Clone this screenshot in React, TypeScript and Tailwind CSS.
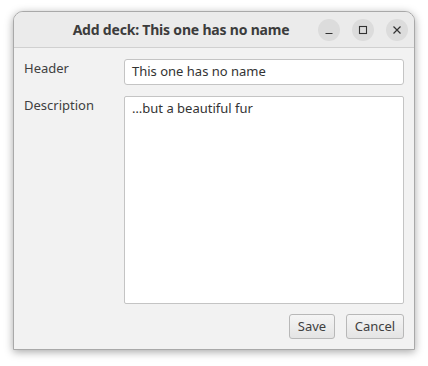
import React from "react";

export default function App() {
  const font = { fontFamily: '"Noto Sans", "Open Sans", sans-serif' };
  return (
    <div className="w-[428px] h-[366px] bg-white pl-[13px] pt-[11px]" style={font}>
      <div className="w-[402px] h-[339px] flex flex-col bg-[#f2f2f2] border border-[#a9a9a9] rounded-t-[10px] shadow-[0_2px_8px_rgba(0,0,0,0.35)] overflow-hidden">
        <div className="h-[36px] shrink-0 bg-[#ebebeb] border-b border-[#d0d0d0] flex items-center relative">
          <div className="absolute left-0 right-[100px] top-0 bottom-0 flex items-center justify-center pl-[34px]">
            <span className="text-[14px] font-bold text-[#3c3c3c] tracking-[-0.2px]">Add deck: This one has no name</span>
          </div>
          <div className="ml-auto flex items-center gap-[12px] pr-[6px]">
            <div className="w-[22px] h-[22px] rounded-full bg-[#dcdcdc] flex items-center justify-center">
              <svg width="10" height="10" viewBox="0 0 10 10"><path d="M1.5 8.5h7" stroke="#333" strokeWidth="1.2" /></svg>
            </div>
            <div className="w-[22px] h-[22px] rounded-full bg-[#dcdcdc] flex items-center justify-center">
              <svg width="10" height="10" viewBox="0 0 10 10"><rect x="1.5" y="1.5" width="7" height="7" fill="none" stroke="#333" strokeWidth="1.1" /></svg>
            </div>
            <div className="w-[22px] h-[22px] rounded-full bg-[#dcdcdc] flex items-center justify-center">
              <svg width="10" height="10" viewBox="0 0 10 10"><path d="M1.5 1.5l7 7M8.5 1.5l-7 7" stroke="#333" strokeWidth="1.2" /></svg>
            </div>
          </div>
        </div>
        <div className="flex-1 flex flex-col pl-[10px] pr-[10px] pt-[11px] pb-[10px] gap-[11px] text-[13px] text-[#404040]">
          <div className="flex">
            <div className="w-[100px] shrink-0 leading-[18px]">Header</div>
            <div className="flex-1 h-[26px] bg-white border border-[#c4c4c4] rounded-[3px] flex items-center px-[7px] text-[#333]">This one has no name</div>
          </div>
          <div className="flex flex-1">
            <div className="w-[100px] shrink-0 leading-[18px]">Description</div>
            <div className="flex-1 bg-white border border-[#c4c4c4] rounded-[2px] px-[7px] pt-[2px] leading-[18px] text-[#333]">…but a beautiful fur</div>
          </div>
          <div className="flex justify-end gap-[11px] -mt-[1px]">
            <div className="h-[25px] w-[46px] flex items-center justify-center rounded-[3px] border border-[#b8b8b8] bg-gradient-to-b from-[#f5f5f5] to-[#e4e4e4] text-[#404040]">Save</div>
            <div className="h-[25px] w-[58px] flex items-center justify-center rounded-[3px] border border-[#b8b8b8] bg-gradient-to-b from-[#f5f5f5] to-[#e4e4e4] text-[#404040]">Cancel</div>
          </div>
        </div>
      </div>
    </div>
  );
}
